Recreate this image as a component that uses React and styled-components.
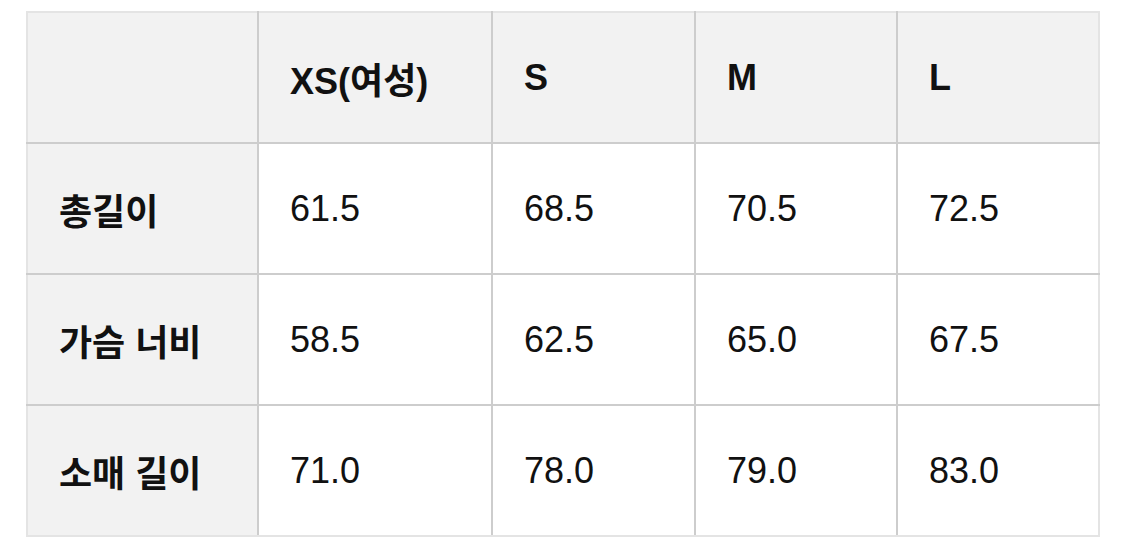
import React from 'react';
import styled, { createGlobalStyle } from 'styled-components';

const GlobalStyle = createGlobalStyle`
  body {
    margin: 0;
    background: #ffffff;
    font-family: "Liberation Sans", "Noto Sans CJK KR", sans-serif;
    color: #111111;
  }
`;

const Page = styled.div`
  padding: 11px 0 0 26px;
`;

const SizeTable = styled.table`
  border-collapse: collapse;
  table-layout: fixed;
  width: 1072px;
`;

const Row = styled.tr`
  height: 131px;

  &:first-child > * {
    border-top-color: #e4e4e4;
  }
  &:last-child > * {
    border-bottom-color: #e4e4e4;
  }
`;

const Cell = styled.td`
  border: 2px solid #cdcdcd;
  padding: 0 0 0 31px;
  font-size: 36px;
  font-weight: ${(p) => (p.$head ? 700 : 400)};
  background: ${(p) => (p.$head ? '#f2f2f2' : '#ffffff')};
  text-align: left;
  vertical-align: middle;
  white-space: nowrap;

  &:first-child {
    border-left-color: #e4e4e4;
  }
  &:last-child {
    border-right-color: #e4e4e4;
  }
`;

const sizes = ['XS(여성)', 'S', 'M', 'L'];

const rows = [
  { label: '총길이', values: ['61.5', '68.5', '70.5', '72.5'] },
  { label: '가슴 너비', values: ['58.5', '62.5', '65.0', '67.5'] },
  { label: '소매 길이', values: ['71.0', '78.0', '79.0', '83.0'] }
];

const widths = [231, 234, 203, 202, 202];

export default function App() {
  return (
    <Page>
      <GlobalStyle />
      <SizeTable>
        <colgroup>
          {widths.map((w, i) => (
            <col key={i} style={{ width: w }} />
          ))}
        </colgroup>
        <tbody>
          <Row>
            <Cell $head />
            {sizes.map((s) => (
              <Cell key={s} $head>
                {s}
              </Cell>
            ))}
          </Row>
          {rows.map((r) => (
            <Row key={r.label}>
              <Cell $head>{r.label}</Cell>
              {r.values.map((v, i) => (
                <Cell key={i}>{v}</Cell>
              ))}
            </Row>
          ))}
        </tbody>
      </SizeTable>
    </Page>
  );
}
